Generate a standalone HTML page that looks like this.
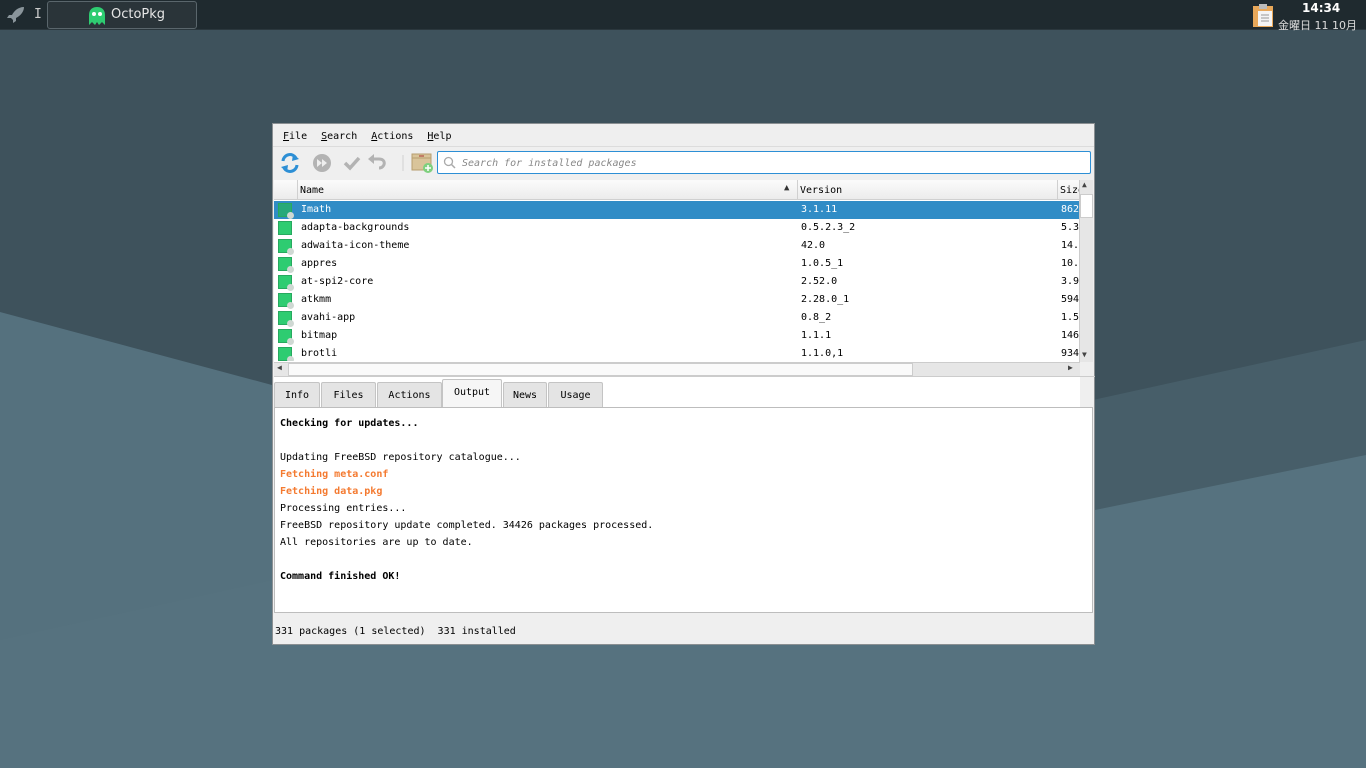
<!DOCTYPE html>
<html><head><meta charset="utf-8"><style>
*{margin:0;padding:0;box-sizing:border-box}
body{width:1366px;height:768px;overflow:hidden;position:relative;font-family:"DejaVu Sans Mono","Liberation Mono",monospace;font-size:10px;color:#000;background:#55717e}
.bg{position:absolute;left:0;top:0}
.top{position:absolute;left:0;top:0;width:1366px;height:30px;background:#1f2a2f;border-bottom:1px solid #2b373d}
.task{position:absolute;left:47px;top:1px;width:150px;height:28px;border:1px solid #5a666c;border-radius:3px;background:#2a3439;color:#e6e6e6;font-family:"DejaVu Sans","Liberation Sans",sans-serif;font-size:13px}
.win{position:absolute;left:272px;top:123px;width:823px;height:522px;background:#efefef;border:1px solid #8a8f92}
.abs{position:absolute}
.menu span{margin-right:14px}
.menu u{text-decoration:underline}
.row{position:absolute;left:1px;width:805px;height:18px;line-height:18px}
.row .ic{position:absolute;left:4px;top:2px;width:14px;height:14px;background:#2ecc71;border:1px solid #27a95f}
.row .ic i{position:absolute;right:-3px;bottom:-3px;width:7px;height:7px;border-radius:50%;background:#cfd8d3}
.row .n{position:absolute;left:27px}
.row .v{position:absolute;left:527px}
.row .s{position:absolute;left:787px}
.tab{position:absolute;top:258px;height:25px;line-height:25px;border:1px solid #c4c4c4;border-bottom:none;background:#e4e4e4;text-align:center;border-radius:2px 2px 0 0}
.out div{height:17px;line-height:17px}
.b{font-weight:bold}.o{color:#f47a30;font-weight:bold}
</style></head><body>
<svg class="bg" width="1366" height="768">
<rect width="1366" height="768" fill="#55717e"/>
<polygon points="0,30 1366,30 1366,455 1095,510 272,385 0,312" fill="#3e525c"/>
<polygon points="0,640 1366,340 1366,768 0,768" fill="#587581" opacity=".35"/>
</svg>
<div class="top">
<svg class="abs" style="left:6px;top:6px" width="20" height="18" viewBox="0 0 20 18"><path d="M18 1 C12 1 8 5 6 9 L3 9 L1 12 L5 12 L7 14 L7 17 L10 15 L10 12 C14 10 18 6 18 1Z" fill="#8a959b"/></svg>
<div class="abs" style="left:34px;top:7px;color:#ccc;font-size:13px">I</div>
<div class="task">
<svg class="abs" style="left:40px;top:4px" width="18" height="20" viewBox="0 0 18 20"><path d="M1 9 C1 3 5 1 9 1 C13 1 17 3 17 9 L17 19 L14 16 L11 19 L9 16 L7 19 L4 16 L1 19Z" fill="#2ecc71"/><circle cx="6" cy="8" r="2" fill="#fff"/><circle cx="12" cy="8" r="2" fill="#fff"/></svg>
<div class="abs" style="left:63px;top:5px">OctoPkg</div>
</div>
<svg class="abs" style="left:1252px;top:3px" width="24" height="24" viewBox="0 0 24 24"><rect x="1" y="3" width="20" height="21" fill="#e8a85a"/><rect x="7" y="1" width="8" height="5" fill="#bbb"/><rect x="6" y="8" width="14" height="15" fill="#f4f4f4"/><path d="M9 12h8M9 15h8M9 18h8" stroke="#999"/></svg>
<div class="abs" style="left:1302px;top:1px;color:#fff;font-weight:bold;font-size:12px;font-family:'DejaVu Sans',sans-serif">14:34</div>
<div class="abs" style="left:1278px;top:17px;color:#ddd;font-size:11px;font-family:'DejaVu Sans','Noto Sans CJK JP',sans-serif">金曜日 11 10月</div>
</div>
<div class="win">
<div class="abs menu" style="left:10px;top:7px"><span><u>F</u>ile</span><span><u>S</u>earch</span><span><u>A</u>ctions</span><span><u>H</u>elp</span></div>
<div class="abs" style="left:0;top:22px;width:821px;height:1px;background:#dcdcdc"></div>
<svg class="abs" style="left:6px;top:27px" width="130" height="24" viewBox="0 0 130 24">
<path d="M4 10 A7 7 0 0 1 17 7 M18 14 A7 7 0 0 1 5 17" fill="none" stroke="#2d8fd5" stroke-width="3"/><path d="M14 3 L20 8 L13 10Z M8 21 L2 16 L9 14Z" fill="#2d8fd5"/>
<circle cx="43" cy="12" r="9" fill="#b3b3b3"/><path d="M38 8 L43 12 L38 16Z M43 8 L48 12 L43 16Z" fill="#eee"/>
<path d="M66 12 L71 17 L80 7" fill="none" stroke="#b3b3b3" stroke-width="3.5"/>
<path d="M100 17 C106 17 108 8 100 8 L94 8" fill="none" stroke="#b3b3b3" stroke-width="3"/><path d="M89 8 L95 3 L95 13Z" fill="#b3b3b3"/>
<path d="M124 4v16" stroke="#d0d0d0"/>
</svg>
<svg class="abs" style="left:138px;top:27px" width="24" height="24" viewBox="0 0 24 24"><rect x="1" y="3" width="19" height="16" fill="#d9c49a" stroke="#b79e6f"/><path d="M1 7h19" stroke="#b79e6f"/><path d="M8 5h5" stroke="#a33"/><circle cx="17" cy="17" r="5" fill="#7ed07e"/><path d="M17 14v6M14 17h6" stroke="#fff" stroke-width="1.5"/></svg>
<div class="abs" style="left:164px;top:27px;width:654px;height:23px;background:#fff;border:1px solid #2d8fd5;border-radius:2px">
<svg class="abs" style="left:5px;top:4px" width="14" height="14"><circle cx="5.5" cy="5.5" r="4" fill="none" stroke="#aaa" stroke-width="1.3"/><path d="M8.5 8.5L12 12" stroke="#aaa" stroke-width="1.5"/></svg>
<div class="abs" style="left:24px;top:6px;color:#888;font-style:italic">Search for installed packages</div>
</div>
<div class="abs" style="left:1px;top:56px;width:806px;height:238px;background:#fff"></div>
<div class="abs" style="left:1px;top:56px;width:806px;height:20px;background:linear-gradient(#fbfbfb,#ececec);border-bottom:1px solid #d0d0d0">
<div class="abs" style="left:23px;top:0;height:20px;border-left:1px solid #d0d0d0"></div>
<div class="abs" style="left:26px;top:5px">Name</div>
<div class="abs" style="left:510px;top:3px;font-size:9px;color:#333">▲</div>
<div class="abs" style="left:523px;top:0;height:20px;border-left:1px solid #d0d0d0"></div>
<div class="abs" style="left:526px;top:5px">Version</div>
<div class="abs" style="left:783px;top:0;height:20px;border-left:1px solid #d0d0d0"></div>
<div class="abs" style="left:786px;top:5px">Size</div>
</div>
<div class="row" style="top:77px;background:#308cc6;color:#fff"><div class="ic" style="background:#27a97a"><i></i></div><span class="n">Imath</span><span class="v">3.1.11</span><span class="s">862</span></div>
<div class="row" style="top:95px"><div class="ic"></div><span class="n">adapta-backgrounds</span><span class="v">0.5.2.3_2</span><span class="s">5.3</span></div>
<div class="row" style="top:113px"><div class="ic"><i></i></div><span class="n">adwaita-icon-theme</span><span class="v">42.0</span><span class="s">14.</span></div>
<div class="row" style="top:131px"><div class="ic"><i></i></div><span class="n">appres</span><span class="v">1.0.5_1</span><span class="s">10.</span></div>
<div class="row" style="top:149px"><div class="ic"><i></i></div><span class="n">at-spi2-core</span><span class="v">2.52.0</span><span class="s">3.9</span></div>
<div class="row" style="top:167px"><div class="ic"><i></i></div><span class="n">atkmm</span><span class="v">2.28.0_1</span><span class="s">594</span></div>
<div class="row" style="top:185px"><div class="ic"><i></i></div><span class="n">avahi-app</span><span class="v">0.8_2</span><span class="s">1.5</span></div>
<div class="row" style="top:203px"><div class="ic"><i></i></div><span class="n">bitmap</span><span class="v">1.1.1</span><span class="s">146</span></div>
<div class="row" style="top:221px;height:16px;overflow:hidden"><div class="ic"><i></i></div><span class="n">brotli</span><span class="v">1.1.0,1</span><span class="s">934</span></div>
<div class="abs" style="left:806px;top:56px;width:14px;height:182px;background:#e6e6e6;border-left:1px solid #ccc">
<div class="abs" style="left:0;top:14px;width:13px;height:24px;background:#fff;border:1px solid #ccc"></div>
<div class="abs" style="left:2px;top:0;font-size:8px;color:#444">▲</div>
<div class="abs" style="left:2px;top:170px;font-size:8px;color:#444">▼</div>
</div>
<div class="abs" style="left:1px;top:238px;width:806px;height:14px;background:#e6e6e6;border-top:1px solid #ccc">
<div class="abs" style="left:14px;top:0;width:625px;height:13px;background:#fafafa;border:1px solid #ccc"></div>
<div class="abs" style="left:3px;top:0;font-size:8px;color:#444">◀</div>
<div class="abs" style="left:794px;top:0;font-size:8px;color:#444">▶</div>
</div>
<div class="abs" style="left:1px;top:252px;width:821px;height:1px;background:#ccc"></div>
<div class="tab" style="left:1px;width:46px">Info</div>
<div class="tab" style="left:48px;width:55px">Files</div>
<div class="tab" style="left:104px;width:65px">Actions</div>
<div class="tab" style="left:169px;top:255px;height:29px;width:60px;background:#f6f6f6;line-height:25px">Output</div>
<div class="tab" style="left:230px;width:44px">News</div>
<div class="tab" style="left:275px;width:55px">Usage</div>
<div class="abs out" style="left:1px;top:283px;width:819px;height:206px;background:#fff;border:1px solid #bdbdbd;padding:7px 0 0 5px">
<div class="b">Checking for updates...</div><div></div>
<div>Updating FreeBSD repository catalogue...</div>
<div class="o">Fetching meta.conf</div>
<div class="o">Fetching data.pkg</div>
<div>Processing entries...</div>
<div>FreeBSD repository update completed. 34426 packages processed.</div>
<div>All repositories are up to date.</div><div></div>
<div class="b">Command finished OK!</div>
</div>
<div class="abs" style="left:2px;top:502px;white-space:pre">331 packages (1 selected)  331 installed</div>
</div>
</body></html>
